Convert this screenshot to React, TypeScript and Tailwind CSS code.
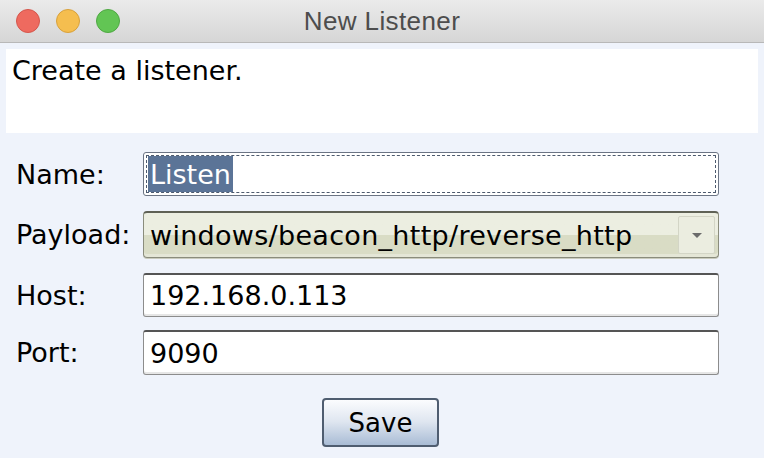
import React from 'react';

const font = { fontFamily: '"DejaVu Sans", "Noto Sans", sans-serif' };

function TrafficLights() {
  return (
    <div className="flex items-center gap-[16px] pl-[16px]">
      <span className="block h-[24px] w-[24px] rounded-full bg-[#ee6a5f] border border-[#d5564c]" />
      <span className="block h-[24px] w-[24px] rounded-full bg-[#f5be4f] border border-[#d8a13c]" />
      <span className="block h-[24px] w-[24px] rounded-full bg-[#62c554] border border-[#4fa843]" />
    </div>
  );
}

function Field({ children, h = 'h-[44px]' }: { children: React.ReactNode; h?: string }) {
  return (
    <div className={`flex-1 ${h} flex items-center rounded-[3px] border border-[#8c8c8c] border-t-[#555] border-t-2 bg-white px-[6px] text-[27px] leading-none text-black shadow-[inset_0_-2px_0_#e6e6e6]`}>
      {children}
    </div>
  );
}

export default function App() {
  return (
    <div className="w-[764px] h-[458px] overflow-hidden bg-[#eff3fb] text-black" style={font}>
      {/* title bar */}
      <div className="relative flex h-[43px] items-center border-b border-[#b8b8b8] bg-gradient-to-b from-[#ebebeb] to-[#d6d6d6]">
        <TrafficLights />
        <div
          className="absolute inset-0 flex items-center justify-center pt-[1px] text-[26px] tracking-[0.4px] text-[#4d4d4d]"
          style={{ fontFamily: '"Liberation Sans", Arial, sans-serif' }}
        >
          New Listener
        </div>
      </div>

      {/* description */}
      <div className="px-[6px] pt-[6px]">
        <div className="h-[84px] bg-white px-[6px] pt-[6px] text-[27px] leading-[32px]">Create a listener.</div>
      </div>

      {/* form */}
      <div className="flex flex-col pl-[16px] pr-[45px] pt-[19px] text-[27px] leading-none">
        <div className="flex items-center">
          <div className="w-[127px]">Name:</div>
          <div className="flex-1 h-[44px] flex items-center rounded-[3px] border border-[#6b7484] bg-white p-[2px]">
            <div className="flex h-full w-full items-center border border-dashed border-[#4d5a6e] pl-[1px]">
              <span className="flex h-full items-center bg-[#5b7497] pl-[2px] pr-[2px] text-white">Listen</span>
            </div>
          </div>
        </div>

        <div className="mt-[15px] flex items-center">
          <div className="w-[127px]">Payload:</div>
          <div className="flex-1 h-[47px] flex items-stretch rounded-[4px] border border-[#8a8c7c] border-t-2 border-t-[#5f6155] bg-gradient-to-b from-[#eceee1] from-50% to-[#d9dcc5] to-50% shadow-[0_1px_0_#c9cbbd,inset_0_-3px_0_#e4e6d6]">
            <div className="flex flex-1 items-center pl-[6px] tracking-[0.3px]">windows/beacon_http/reverse_http</div>
            <div className="my-[3px] mr-[3px] flex w-[37px] items-center justify-center rounded-[2px] border border-[#d3d5c6] bg-[#ebede0]">
              <svg width="12" height="7" viewBox="0 0 12 7">
                <path d="M1 1 L11 1 L6 6 Z" fill="#6b6b6b" />
              </svg>
            </div>
          </div>
        </div>

        <div className="mt-[15px] flex items-center">
          <div className="w-[127px]">Host:</div>
          <Field>192.168.0.113</Field>
        </div>

        <div className="mt-[13px] flex items-center">
          <div className="w-[127px]">Port:</div>
          <Field h="h-[45px]">9090</Field>
        </div>

        <div className="mt-[23px] flex justify-center">
          <button className="ml-[26px] flex h-[49px] w-[117px] items-center justify-center rounded-[4px] border-2 border-[#4f5d70] bg-gradient-to-b from-[#fbfcfe] from-0% via-[#dfe6f0] via-48% to-[#a9bcd5] text-[26px] leading-none text-black">
            Save
          </button>
        </div>
      </div>
    </div>
  );
}
